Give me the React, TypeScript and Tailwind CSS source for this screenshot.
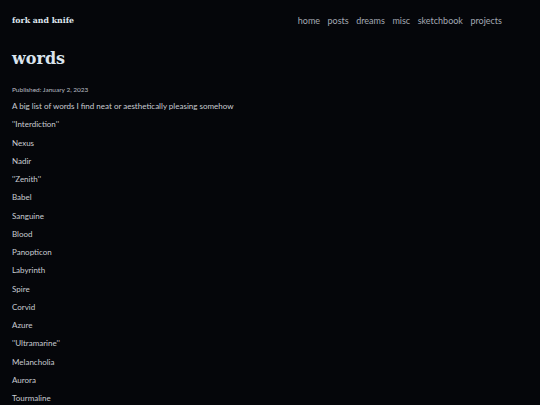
import React from "react";

const words = [
  "''Interdiction''",
  "Nexus",
  "Nadir",
  "''Zenith''",
  "Babel",
  "Sanguine",
  "Blood",
  "Panopticon",
  "Labyrinth",
  "Spire",
  "Corvid",
  "Azure",
  "''Ultramarine''",
  "Melancholia",
  "Aurora",
  "Tourmaline",
];

export default function App() {
  return (
    <div
      className="w-[540px] h-[405px] overflow-hidden bg-[#05060a] text-[#c9ccd2]"
      style={{ fontFamily: "Lato, 'Noto Sans', sans-serif" }}
    >
      <header className="flex items-center justify-between pl-[12px] pr-[38px] pt-[15px] h-[26px]">
        <div
          className="text-[7.8px] font-bold text-[#dfe5ee] leading-none"
          style={{ fontFamily: "'DejaVu Serif', serif" }}
        >
          fork and knife
        </div>
        <nav className="flex gap-[7.5px] text-[9px] text-[#a3a9b3] leading-none">
          <span>home</span>
          <span>posts</span>
          <span>dreams</span>
          <span>misc</span>
          <span>sketchbook</span>
          <span>projects</span>
        </nav>
      </header>
      <main className="px-[12px]">
        <h1
          className="mt-[25px] text-[16px] font-bold text-[#dbe4ee] leading-none"
          style={{ fontFamily: "'DejaVu Serif', serif" }}
        >
          words
        </h1>
        <div className="mt-[19px] text-[6.5px] h-[7px] leading-[7px] text-[#b8bcc3]">
          Published: January 2, 2023
        </div>
        <div className="mt-[7px] text-[8px]">
          <p className="leading-[12px] mb-[6.25px]">
            A big list of words I find neat or aesthetically pleasing somehow
          </p>
          {words.map((w) => (
            <p key={w} className="leading-[12px] mb-[6.25px]">
              {w}
            </p>
          ))}
        </div>
      </main>
    </div>
  );
}
